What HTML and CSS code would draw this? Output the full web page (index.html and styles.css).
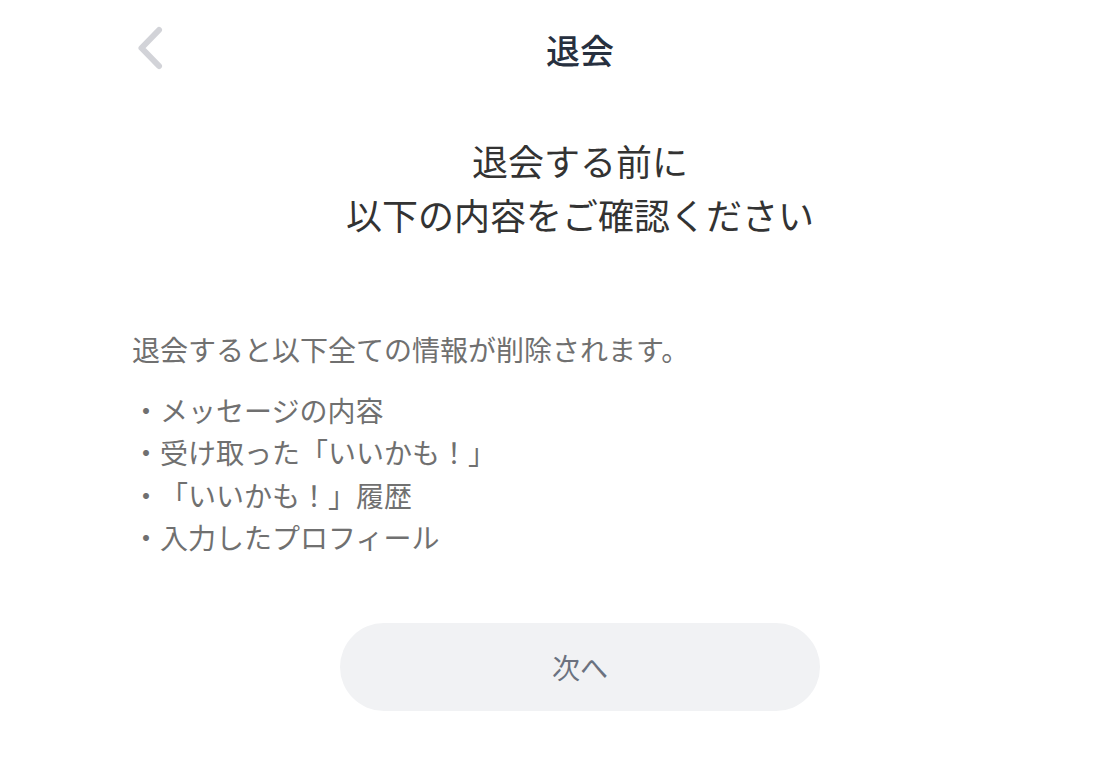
FILE: index.html
```html
<!DOCTYPE html>
<html lang="ja">
<head>
<meta charset="utf-8">
<title>退会</title>
<link rel="stylesheet" href="styles.css">
</head>
<body>
<div class="page">
  <div class="column">
    <header class="nav">
      <button class="back" aria-label="戻る">
        <svg width="32" height="46" viewBox="0 0 32 46"><path d="M25 5 L7.5 23 L25 41" fill="none" stroke="#d2d3d8" stroke-width="6" stroke-linecap="round" stroke-linejoin="round"/></svg>
      </button>
      <h1 class="nav-title">退会</h1>
    </header>
    <h2 class="heading">退会する前に<br>以下の内容をご確認ください</h2>
    <p class="lead">退会すると以下全ての情報が削除されます。</p>
    <ul class="items">
      <li>・メッセージの内容</li>
      <li>・受け取った「いいかも！」</li>
      <li>・「いいかも！」履歴</li>
      <li>・入力したプロフィール</li>
    </ul>
    <div class="actions">
      <button class="next">次へ</button>
    </div>
  </div>
</div>
</body>
</html>
```
FILE: styles.css
```css
* { box-sizing: border-box; }
html, body { margin: 0; padding: 0; background: #ffffff; }
body {
  font-family: "Noto Sans CJK JP", "Noto Sans", sans-serif;
  color: #333333;
  text-spacing-trim: space-all;
}
.page {
  padding-left: 56px;
}
.column {
  width: 896px;
  margin: 0 auto;
}
.nav {
  position: relative;
  height: 100px;
  display: flex;
  align-items: center;
  justify-content: center;
}
.back {
  position: absolute;
  left: 2px;
  top: 25px;
  padding: 0;
  border: 0;
  background: none;
  display: flex;
}
.nav-title {
  margin: 0;
  font-size: 34px;
  font-weight: 500;
  color: #27303f;
  line-height: 40px;
}
.heading {
  margin: 33px 0 0;
  text-align: center;
  font-size: 36px;
  font-weight: 400;
  line-height: 54px;
  color: #333333;
}
.lead {
  margin: 87px 0 0;
  font-size: 28px;
  line-height: 42px;
  color: #707070;
}
.items {
  list-style: none;
  margin: 19px 0 0;
  padding: 0;
  font-size: 28px;
  line-height: 42.4px;
  color: #707070;
}
.actions {
  display: flex;
  justify-content: center;
  margin-top: 64px;
}
.next {
  width: 480px;
  height: 88px;
  border: 0;
  border-radius: 44px;
  background: #f1f2f4;
  color: #6b7280;
  font-family: inherit;
  font-size: 28px;
}
```
